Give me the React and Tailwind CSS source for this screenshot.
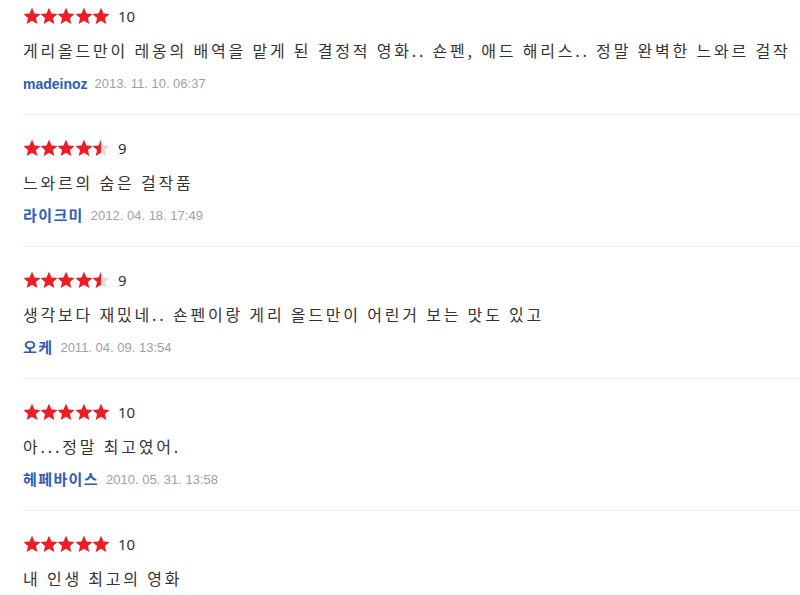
const reviews = [
  { score: 10, stars: 5, text: "게리올드만이 레옹의 배역을 맡게 된 결정적 영화.. 숀펜, 애드 해리스.. 정말 완벽한 느와르 걸작", author: "madeinoz", date: "2013. 11. 10. 06:37" },
  { score: 9, stars: 4.5, text: "느와르의 숨은 걸작품", author: "라이크미", ko: true, date: "2012. 04. 18. 17:49" },
  { score: 9, stars: 4.5, text: "생각보다 재밌네.. 숀펜이랑 게리 올드만이 어린거 보는 맛도 있고", author: "오케", ko: true, date: "2011. 04. 09. 13:54" },
  { score: 10, stars: 5, text: "아...정말 최고였어.", author: "헤페바이스", ko: true, date: "2010. 05. 31. 13:58" },
  { score: 10, stars: 5, text: "내 인생 최고의 영화", author: "", date: "" },
];

const STAR = "M9 0.8l2.45 5.6 6.05.55-4.6 4 1.38 5.95L9 13.75 3.72 16.9l1.38-5.95-4.6-4 6.05-.55z";

function Star({ fill }) {
  // fill: 1 = full, 0.5 = half, 0 = empty
  return (
    <span className="relative inline-block w-[17.2px] h-[18px]">
      <svg viewBox="0 0 18 18" className="absolute left-0 top-0 w-[18px] h-[18px]">
        <path d={STAR} fill="#dcdcdc" />
      </svg>
      {fill > 0 && (
        <span className="absolute left-0 top-0 h-[18px] overflow-hidden" style={{ width: fill === 1 ? 18 : 9 }}>
          <svg viewBox="0 0 18 18" className="w-[18px] h-[18px]">
            <path d={STAR} fill="#ee1c25" />
          </svg>
        </span>
      )}
    </span>
  );
}

function Stars({ value }) {
  return (
    <div className="flex">
      {[1, 2, 3, 4, 5].map((i) => (
        <Star key={i} fill={value >= i ? 1 : value >= i - 0.5 ? 0.5 : 0} />
      ))}
    </div>
  );
}

export default function App() {
  return (
    <div className="w-[800px] h-[595px] overflow-hidden bg-white pl-[23px]">
      {reviews.map((r, idx) => (
        <div
          key={idx}
          className={`border-b border-[#efefef] pb-[20px] ${idx === 0 ? "pt-[7px]" : "pt-[24px]"}`}
        >
          <div className="flex items-center h-[18px]">
            <Stars value={r.stars} />
            <span className="ml-[9px] text-[15px] leading-[18px] text-[#333] font-['Noto_Sans',sans-serif]">
              {r.score}
            </span>
          </div>
          <p className="mt-[13px] text-[16px] leading-[24px] text-[#333] tracking-[2.8px] whitespace-nowrap font-['Noto_Sans_CJK_KR',sans-serif]">
            {r.text}
          </p>
          {r.author && (
            <div className="mt-[12px] flex items-center h-[20px]">
              <span
                className={`font-bold text-[#2d5cb8] font-['Liberation_Sans','Noto_Sans_CJK_KR',sans-serif] ${
                  r.ko ? "text-[15px] tracking-[1.4px]" : "text-[14px]"
                }`}
              >
                {r.author}
              </span>
              <span className="ml-[7px] text-[13px] text-[#a0a0a0] font-['Liberation_Sans',sans-serif]">
                {r.date}
              </span>
            </div>
          )}
        </div>
      ))}
    </div>
  );
}
